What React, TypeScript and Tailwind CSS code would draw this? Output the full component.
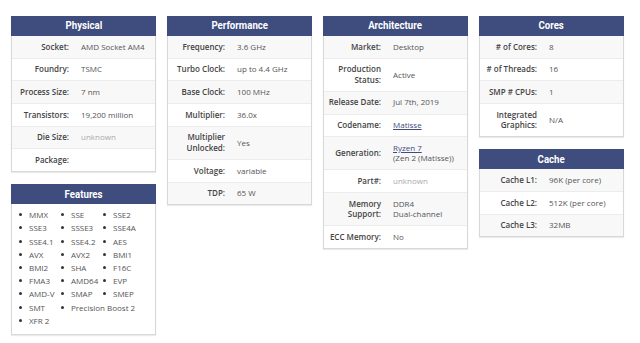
import React from "react";

type Row = { label: string; value?: React.ReactNode; muted?: boolean };

const body = { fontFamily: '"Open Sans", "Liberation Sans", sans-serif' };
const head = { fontFamily: '"Roboto", "Liberation Sans", sans-serif' };

const Header = ({ title }: { title: string }) => (
  <div
    className="h-[20px] bg-[#3e4c7e] text-white text-[11.5px] font-bold flex items-center justify-center"
    style={head}
  >
    <span className="inline-block scale-x-[0.84]">{title}</span>
  </div>
);

const Panel = ({ title, rows }: { title: string; rows: Row[] }) => (
  <div className="shadow-[0_1px_1px_rgba(0,0,0,0.08)]">
    <Header title={title} />
    <div className="border-x border-b border-[#d8d8d8]">
      {rows.map((r, i) => (
        <div
          key={r.label}
          className={
            "flex items-center py-[5.6px] text-[8px] leading-[10.5px] " +
            (i % 2 === 0 ? "bg-[#f8f8f8] " : "bg-white ") +
            (i < rows.length - 1 ? "border-b border-[#ececec]" : "")
          }
        >
          <div className="w-[62px] shrink-0 pl-[2px] pr-[5px] text-right font-semibold text-[#444]">
            {r.label}
          </div>
          <div className={"pl-[7px] " + (r.muted ? "text-[#aaa]" : "text-[#555]")}>
            {r.value}
          </div>
        </div>
      ))}
    </div>
  </div>
);

const Link = ({ children }: { children: React.ReactNode }) => (
  <span className="text-[#3e4c7e] underline">{children}</span>
);

const features = [
  "MMX", "SSE", "SSE2", "SSE3", "SSSE3", "SSE4A", "SSE4.1", "SSE4.2", "AES",
  "AVX", "AVX2", "BMI1", "BMI2", "SHA", "F16C", "FMA3", "AMD64", "EVP",
  "AMD-V", "SMAP", "SMEP", "SMT", "Precision Boost 2", "XFR 2",
];

export default function App() {
  return (
    <div className="w-[640px] h-[343px] bg-white pt-[16px] pl-[11px]" style={body}>
      <div className="grid grid-cols-[145px_145px_145px_145px] gap-x-[11px] items-start">
        <div className="flex flex-col gap-[12px]">
          <Panel
            title="Physical"
            rows={[
              { label: "Socket:", value: "AMD Socket AM4" },
              { label: "Foundry:", value: "TSMC" },
              { label: "Process Size:", value: "7 nm" },
              { label: "Transistors:", value: "19,200 million" },
              { label: "Die Size:", value: "unknown", muted: true },
              { label: "Package:", value: "" },
            ]}
          />
          <div className="shadow-[0_1px_1px_rgba(0,0,0,0.08)]">
            <Header title="Features" />
            <ul className="border-x border-b border-[#d8d8d8] flex flex-wrap pl-[7px] pr-[2px] pt-[4px] pb-[7px] text-[8px] leading-[13.2px] text-[#555]">
              {features.map((f) => (
                <li key={f} className="min-w-[42px] flex items-center pr-[4px]">
                  <span className="w-[3px] h-[3px] rounded-full bg-[#333] mr-[7px]" />
                  {f}
                </li>
              ))}
            </ul>
          </div>
        </div>
        <Panel
          title="Performance"
          rows={[
            { label: "Frequency:", value: "3.6 GHz" },
            { label: "Turbo Clock:", value: "up to 4.4 GHz" },
            { label: "Base Clock:", value: "100 MHz" },
            { label: "Multiplier:", value: "36.0x" },
            { label: "Multiplier Unlocked:", value: "Yes" },
            { label: "Voltage:", value: "variable" },
            { label: "TDP:", value: "65 W" },
          ]}
        />
        <Panel
          title="Architecture"
          rows={[
            { label: "Market:", value: "Desktop" },
            { label: "Production Status:", value: "Active" },
            { label: "Release Date:", value: "Jul 7th, 2019" },
            { label: "Codename:", value: <Link>Matisse</Link> },
            {
              label: "Generation:",
              value: (
                <>
                  <Link>Ryzen 7</Link>
                  <br />
                  (Zen 2 (Matisse))
                </>
              ),
            },
            { label: "Part#:", value: "unknown", muted: true },
            {
              label: "Memory Support:",
              value: (
                <>
                  DDR4
                  <br />
                  Dual-channel
                </>
              ),
            },
            { label: "ECC Memory:", value: "No" },
          ]}
        />
        <div className="flex flex-col gap-[12px]">
          <Panel
            title="Cores"
            rows={[
              { label: "# of Cores:", value: "8" },
              { label: "# of Threads:", value: "16" },
              { label: "SMP # CPUs:", value: "1" },
              { label: "Integrated Graphics:", value: "N/A" },
            ]}
          />
          <Panel
            title="Cache"
            rows={[
              { label: "Cache L1:", value: "96K (per core)" },
              { label: "Cache L2:", value: "512K (per core)" },
              { label: "Cache L3:", value: "32MB" },
            ]}
          />
        </div>
      </div>
    </div>
  );
}
